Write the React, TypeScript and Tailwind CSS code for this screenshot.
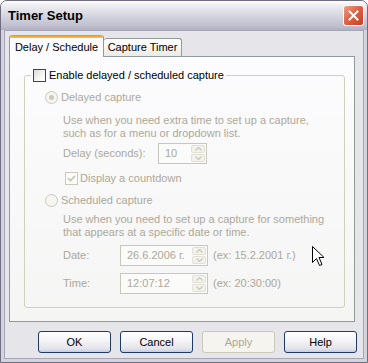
import React from "react";

const DIS = "text-[#aca899]";

function Checkbox({ checked, disabled }: { checked?: boolean; disabled?: boolean }) {
  return (
    <span
      className={`flex h-[13px] w-[13px] shrink-0 items-center justify-center border ${
        disabled
          ? "border-[#cac8bb] bg-[#fbfbf8]"
          : "border-[#2b4a6e] bg-[linear-gradient(135deg,#dcdcd6_0%,#f6f6f4_60%,#ffffff_100%)]"
      }`}
    >
      {checked && (
        <svg width="9" height="9" viewBox="0 0 9 9">
          <path d="M1 4.2 L3.5 6.7 L8 1.8" fill="none" stroke={disabled ? "#cac8bb" : "#21a121"} strokeWidth="1.8" />
        </svg>
      )}
    </span>
  );
}

function Radio({ checked }: { checked?: boolean }) {
  return (
    <span className="flex h-[13px] w-[13px] shrink-0 items-center justify-center rounded-full border border-[#cac8bb] bg-[#f6f5f0]">
      {checked && <span className="h-[5px] w-[5px] rounded-full bg-[#cac8bb]" />}
    </span>
  );
}

function SpinBtn({ up }: { up?: boolean }) {
  return (
    <span className="flex h-[8px] items-center justify-center rounded-[2px] border border-[#e2e0d6] bg-[#f3f2ec]">
      <svg width="7" height="4" viewBox="0 0 7 4">
        <path d={up ? "M0.5 3.5 L3.5 0.5 L6.5 3.5" : "M0.5 0.5 L3.5 3.5 L6.5 0.5"} fill="none" stroke="#cac8bb" strokeWidth="1.3" />
      </svg>
    </span>
  );
}

function SpinBox({ value, className }: { value: string; className: string }) {
  return (
    <div className={`flex h-[21px] shrink-0 items-stretch border border-[#c9c7ba] bg-[#fbfbf9] p-[1px] ${className}`}>
      <span className={`flex-1 pl-[5px] leading-[17px] ${DIS}`}>{value}</span>
      <div className="flex w-[14px] flex-col justify-center gap-[1px]">
        <SpinBtn up />
        <SpinBtn />
      </div>
    </div>
  );
}

function Button({ label, disabled }: { label: string; disabled?: boolean }) {
  return (
    <div
      className={`flex h-[22px] w-[73px] items-center justify-center rounded-[3px] border ${
        disabled
          ? "border-[#cac8bb] bg-[#f5f4ef] text-[#aca899]"
          : "border-[#1e3a66] bg-[linear-gradient(to_bottom,#ffffff_0%,#f4f4f6_45%,#e2e2ea_85%,#c9cbdc_100%)] text-black"
      }`}
    >
      {label}
    </div>
  );
}

export default function App() {
  return (
    <div className="relative h-[363px] w-[368px] overflow-hidden bg-white font-['Liberation_Sans',Arial,sans-serif] text-[11px] leading-[13px]">
      <div className="flex h-full w-full flex-col rounded-t-[7px] border border-[#6e6e80] bg-[#d4d4de]">
        {/* Title bar */}
        <div className="flex h-[29px] shrink-0 items-center justify-between rounded-t-[6px] bg-[linear-gradient(to_bottom,#ffffff_0%,#eeeef3_15%,#d6d6e0_50%,#c0c0cf_85%,#b0b0c2_100%)] pl-[7px] pr-[3px]">
          <span className="text-[13px] font-bold text-black">Timer Setup</span>
          <div className="flex h-[21px] w-[21px] items-center justify-center rounded-[3px] border border-white bg-[linear-gradient(135deg,#f0a08a_0%,#dc6448_45%,#c2401e_100%)]">
            <svg width="11" height="11" viewBox="0 0 11 11">
              <path d="M1.5 1.5 L9.5 9.5 M9.5 1.5 L1.5 9.5" stroke="#ffffff" strokeWidth="2" strokeLinecap="square" />
            </svg>
          </div>
        </div>

        {/* Client area */}
        <div className="mx-[3px] mb-[3px] flex flex-1 flex-col border border-[#a6a6b6] bg-[#e6e5e9] pl-[4px] pr-[6px] pt-[4px]">
          {/* Tabs */}
          <div className="flex h-[21px] items-end">
            <div className="relative z-10 -mb-[1px] flex h-[22px] w-[95px] flex-col rounded-t-[3px] border-x border-[#919b9c] bg-[#fcfcfe]">
              <div className="h-[3px] rounded-t-[3px] bg-[linear-gradient(to_bottom,#e68b2c,#ffc73c)]" />
              <div className="flex flex-1 items-center justify-center pb-[1px]">Delay / Schedule</div>
            </div>
            <div className="flex h-[18px] w-[78px] items-center justify-center rounded-t-[3px] border border-b-0 border-l-0 border-[#919b9c] bg-[linear-gradient(to_bottom,#ffffff,#ecebe6)]">
              Capture Timer
            </div>
          </div>

          {/* Panel */}
          <div className="flex h-[266px] w-[346px] flex-col border border-[#919b9c] bg-[linear-gradient(to_bottom,#fcfcfe,#f5f5f4)]">
            <fieldset className="ml-[14px] mt-[12px] h-[239px] w-[321px] rounded-[3px] border border-[#d0d0bf]">
              <legend className="ml-[6px] px-[2px]">
                <span className="flex h-[13px] items-center gap-[3px]">
                  <Checkbox />
                  <span className="text-black">Enable delayed / scheduled capture</span>
                </span>
              </legend>

              <div className={`flex flex-col ${DIS}`}>
                <div className="ml-[20px] mt-[9px] flex h-[13px] items-center gap-[3px]">
                  <Radio checked />
                  <span>Delayed capture</span>
                </div>
                <div className="ml-[38px] mt-[10px]">
                  <div>Use when you need extra time to set up a capture,</div>
                  <div>such as for a menu or dropdown list.</div>
                </div>
                <div className="ml-[38px] mt-[3px] flex items-center">
                  <span className="w-[95px]">Delay (seconds):</span>
                  <SpinBox value="10" className="w-[49px]" />
                </div>
                <div className="ml-[40px] mt-[8px] flex h-[13px] items-center gap-[2px]">
                  <Checkbox checked disabled />
                  <span>Display a countdown</span>
                </div>
                <div className="ml-[20px] mt-[9px] flex h-[13px] items-center gap-[3px]">
                  <Radio />
                  <span>Scheduled capture</span>
                </div>
                <div className="ml-[38px] mt-[6px]">
                  <div>Use when you need to set up a capture for something</div>
                  <div>that appears at a specific date or time.</div>
                </div>
                <div className="ml-[38px] mt-[6px] flex items-center">
                  <span className="w-[57px]">Date:</span>
                  <SpinBox value="26.6.2006 г." className="w-[88px]" />
                  <span className="ml-[5px]">(ex: 15.2.2001 г.)</span>
                </div>
                <div className="ml-[38px] mt-[7px] flex items-center">
                  <span className="w-[57px]">Time:</span>
                  <SpinBox value="12:07:12" className="w-[88px]" />
                  <span className="ml-[5px]">(ex: 20:30:00)</span>
                </div>
              </div>
            </fieldset>
          </div>

          {/* Buttons */}
          <div className="mt-[9px] flex justify-end gap-[9px] pr-[0px]">
            <Button label="OK" />
            <Button label="Cancel" />
            <Button label="Apply" disabled />
            <Button label="Help" />
          </div>
        </div>
      </div>

      {/* Mouse cursor */}
      <svg className="absolute left-[312px] top-[246px]" width="13" height="21" viewBox="0 0 13 21">
        <path d="M0.5 0.5 L0.5 16.5 L4.5 12.5 L7.5 19.5 L10 18.5 L7 11.5 L12 11.5 Z" fill="#ffffff" stroke="#000000" strokeWidth="1" strokeLinejoin="miter" />
      </svg>
    </div>
  );
}
